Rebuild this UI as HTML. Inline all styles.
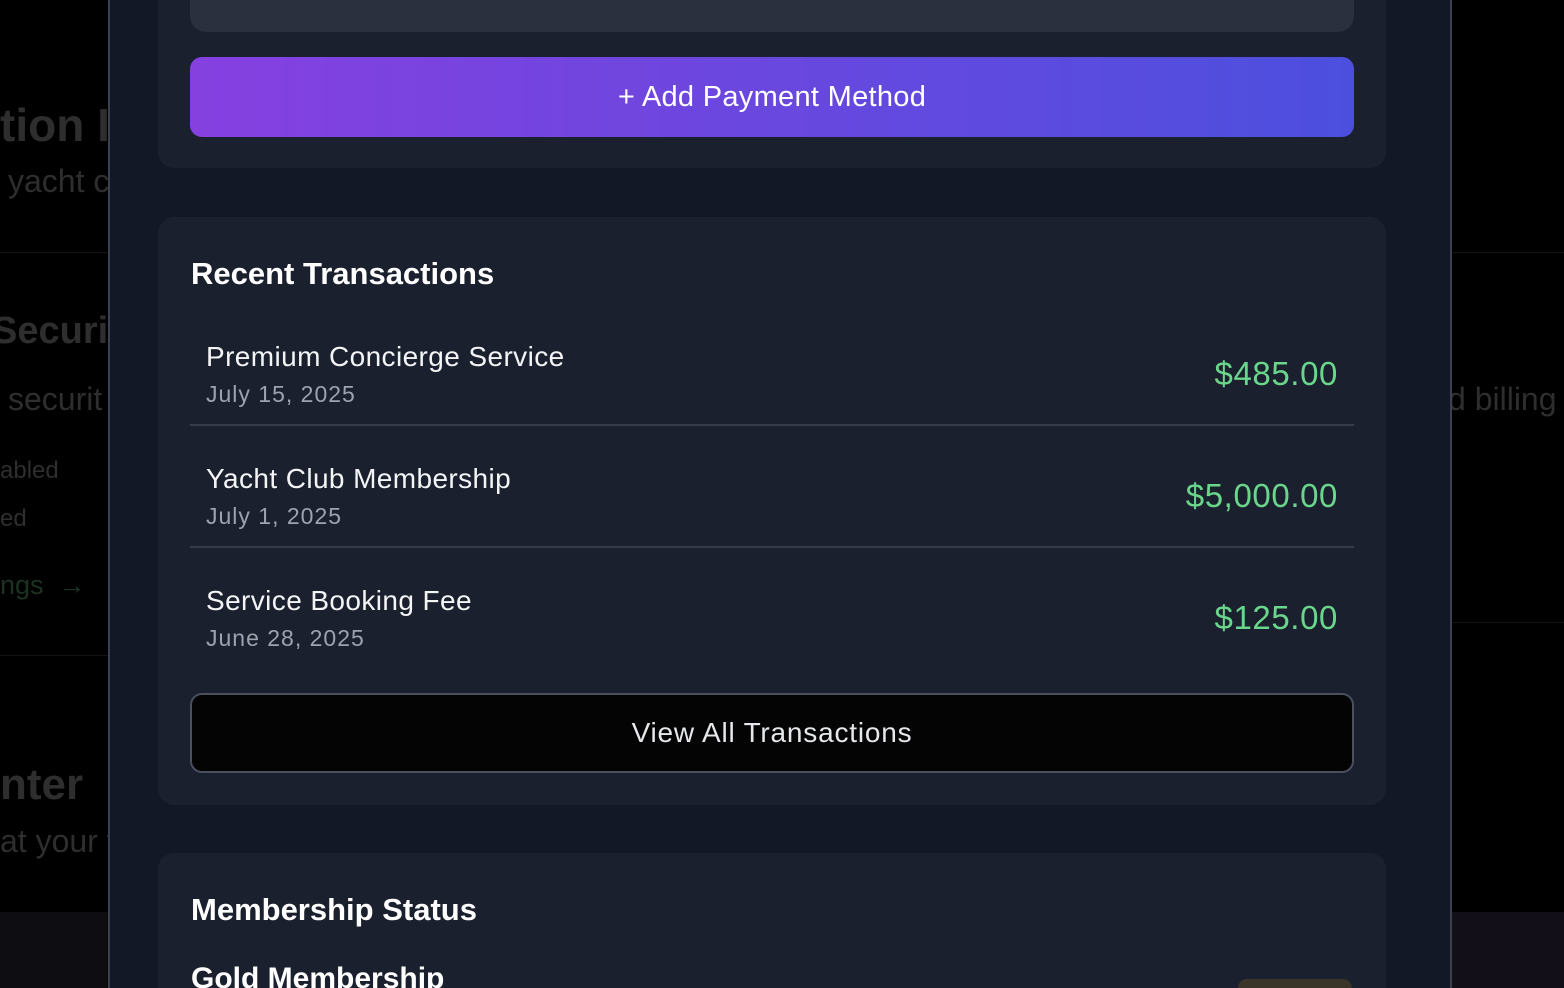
<!DOCTYPE html>
<html style="width:1564px;height:988px;overflow:hidden"><head><meta charset="utf-8"><style>
*{margin:0;padding:0;box-sizing:border-box}
body{width:1564px;height:988px;overflow:hidden;background:#000;font-family:"Liberation Sans",sans-serif;position:relative}
.a{position:absolute}
.dim{color:#2e2e2e}
.modal{left:108px;top:0;width:1344px;height:988px;background:#121826;border-left:2px solid #3a4150;border-right:2px solid #3a4150}
.card{background:#1a202d;border-radius:16px;left:158px;width:1228px}
.row{left:190px;width:1164px;height:122px;border-bottom:2px solid #353c49}
.t{position:absolute;left:16px;font-size:28px;letter-spacing:.4px;color:#f3f4f6}
.d{position:absolute;left:16px;font-size:23px;color:#9ca3af;letter-spacing:1px}
.amt{position:absolute;right:16px;font-size:33px;color:#6ad68c;letter-spacing:.6px}
</style></head><body>
<div class="a" style="left:0;top:252px;width:1564px;height:1px;background:#141414"></div>
<div class="a" style="left:0;top:655px;width:120px;height:1px;background:#141414"></div>
<div class="a" style="left:1440px;top:622px;width:124px;height:1px;background:#141414"></div>
<div class="a" style="left:0;top:912px;width:1564px;height:76px;background:#0d0d12"></div>
<div class="a" style="left:1440px;top:912px;width:124px;height:76px;background:#130f18"></div>
<div class="a dim" style="left:0;top:98px;font-size:46px;font-weight:bold">tion I</div>
<div class="a dim" style="left:8px;top:163px;font-size:32px">yacht c</div>
<div class="a dim" style="left:-8px;top:310px;font-size:38px;font-weight:bold">Securit</div>
<div class="a dim" style="left:8px;top:381px;font-size:32px">securit</div>
<div class="a dim" style="left:0;top:457px;font-size:24px">abled</div>
<div class="a dim" style="left:0;top:505px;font-size:24px">ed</div>
<div class="a" style="left:0;top:570px;font-size:27px;color:#1c3322">ngs &nbsp;→</div>
<div class="a dim" style="left:0;top:760px;font-size:44px;font-weight:bold">nter</div>
<div class="a dim" style="left:0;top:823px;font-size:32px">at your t</div>
<div class="a dim" style="left:1448px;top:381px;font-size:32px">d billing</div>

<div class="a modal"></div>
<div class="a card" style="top:-20px;height:188px"></div>
<div class="a" style="left:190px;top:-20px;width:1164px;height:52px;background:#2a303d;border-radius:16px"></div>
<div class="a" style="left:1180px;top:-2px;width:146px;height:2px;background:#555c68"></div>
<div class="a" style="left:190px;top:57px;width:1164px;height:80px;border-radius:12px;background:linear-gradient(90deg,#8640e0,#4c4fde);color:#fff;font-size:29px;letter-spacing:.3px;text-align:center;line-height:80px">+ Add Payment Method</div>

<div class="a card" style="top:217px;height:588px"></div>
<div class="a" style="left:191px;top:256px;font-size:31px;font-weight:bold;color:#fff">Recent Transactions</div>
<div class="a row" style="top:304px"><div class="t" style="top:37px">Premium Concierge Service</div><div class="d" style="top:77px">July 15, 2025</div><div class="amt" style="top:51px">$485.00</div></div>
<div class="a row" style="top:426px"><div class="t" style="top:37px">Yacht Club Membership</div><div class="d" style="top:77px">July 1, 2025</div><div class="amt" style="top:51px">$5,000.00</div></div>
<div class="a row" style="top:548px;border:none"><div class="t" style="top:37px">Service Booking Fee</div><div class="d" style="top:77px">June 28, 2025</div><div class="amt" style="top:51px">$125.00</div></div>
<div class="a" style="left:190px;top:693px;width:1164px;height:80px;border:2px solid #4a505c;border-radius:12px;background:#040404;color:#e5e7eb;font-size:28px;text-align:center;line-height:76px;letter-spacing:.8px">View All Transactions</div>

<div class="a card" style="top:853px;height:135px;border-radius:16px 16px 0 0"></div>
<div class="a" style="left:191px;top:892px;font-size:31px;font-weight:bold;color:#fff">Membership Status</div>
<div class="a" style="left:191px;top:962px;font-size:30px;font-weight:bold;color:#fff">Gold Membership</div>
<div class="a" style="left:1238px;top:979px;width:114px;height:9px;border-radius:20px 20px 0 0;background:#3a3528"></div>
</body></html>
